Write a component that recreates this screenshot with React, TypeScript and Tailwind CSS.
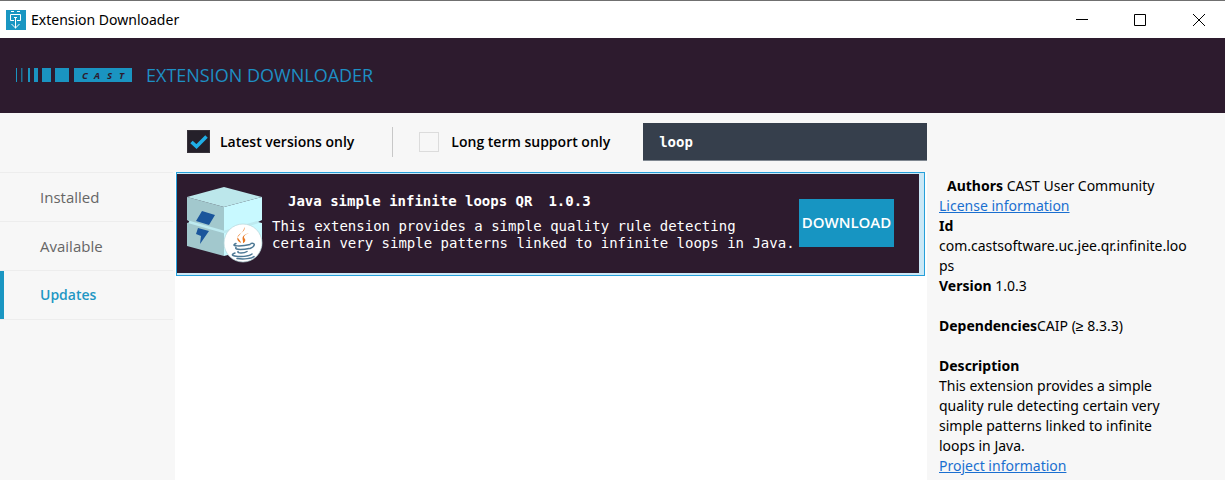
import { useState } from "react";

function AppIcon() {
  return (
    <svg viewBox="0 0 20 20" className="size-5 shrink-0" aria-hidden="true">
      <rect width="20" height="20" fill="#1996c2" />
      <g stroke="#fff" fill="none">
        <path d="M5 1.5h3M11 1.5h3" />
        <path d="M8 10.5H4.5v-6H14.500v6H11M8 7.500h3" />
        <path d="M9.500 8v10.500M5.500 14l4 4 4-4" />
      </g>
    </svg>
  );
}

function CastLogo() {
  return (
    <svg viewBox="0 0 116 14" className="h-[14px] w-[116px] shrink-0" role="img" aria-label="CAST">
      <g fill="#1a94c1">
        <rect x="0" width="1" height="14" />
        <rect x="5" width="1.500" height="14" opacity=".7" />
        <rect x="12" width="2" height="14" />
        <rect x="18" width="4" height="14" />
        <rect x="26" width="9" height="14" />
        <rect x="39" width="14" height="14" />
        <rect x="58" width="58" height="14" />
      </g>
      <g
        fill="#2d1b2e"
        fontFamily="'Open Sans', sans-serif"
        fontSize="9.500"
        fontWeight="700"
        fontStyle="italic"
      >
        <text x="66" y="10.500">C</text>
        <text x="78" y="10.500">A</text>
        <text x="91" y="10.500">S</text>
        <text x="103" y="10.500">T</text>
      </g>
    </svg>
  );
}

function PackageIcon() {
  return (
    <svg viewBox="0 0 78 78" className="size-[78px] shrink-0" aria-hidden="true">
      <path d="M1 11 38 21v49L1 60V37l3-1-3-2z" fill="#a2c8cd" />
      <path d="M38 21 76 11v23l-4 2 4 1v23L38 70z" fill="#c8f9ff" />
      <path d="M1 11 38 1 76 11 38 21z" fill="#bce7eb" />
      <path d="m16 25 13 4-6 10-13-4zM12 42l11 3-9 13 1-8-5-2z" fill="#1a559b" />
      <path d="M3 36 38 46 72 36" fill="none" stroke="#bdeaf0" strokeWidth="2.500" />
      <circle cx="57" cy="57" r="19" fill="#fff" stroke="#b5d4d9" strokeWidth=".7" />
      <path d="M58 41c3 5-8 7-6 11 1 2 3 3 3 5-10-6 4-9 3-16M63 47c-5 2-6 4-4 6 1 2-1 4-2 4 1-3-4-7 6-10" fill="#e87722" />
      <g fill="none" stroke="#4d7894" strokeWidth="1.500" strokeLinecap="round">
        <path d="M50 57.500c-7 3 6 3 14 1M65 57.500c5-1 4 3-1 5M50 61.500c-2 3 9 2 13 1M52 65.500c-1 2 6 2 9 0M49 67c-10 4 12 5 17 1M51 72.500c7 1 15 0 17-2" />
      </g>
    </svg>
  );
}

const sections = ["Installed", "Available", "Updates"];

export default function App() {
  const [active, setActive] = useState("Updates");
  const [latest, setLatest] = useState(true);
  const [lts, setLts] = useState(false);
  const [query, setQuery] = useState("loop");

  return (
    <div className="flex min-h-screen flex-col bg-[#f7f7f7] font-['Open_Sans',sans-serif] text-black">
      <div className="flex h-[38px] items-center justify-between border-t border-[#707070] bg-white pl-1.5">
        <div className="flex items-center gap-[5px]">
          <AppIcon />
          <span className="font-['Noto_Sans',sans-serif] text-sm">Extension Downloader</span>
        </div>
        <div className="flex">
          <button aria-label="Minimize" className="flex h-9 w-[58px] items-center justify-center">
            <svg viewBox="0 0 12 12" className="size-3"><path d="M0 5.500h12" stroke="#000" /></svg>
          </button>
          <button aria-label="Maximize" className="flex h-9 w-[58px] items-center justify-center">
            <svg viewBox="0 0 12 12" className="size-3"><path d="M.5.500h11v11H.5z" fill="none" stroke="#000" /></svg>
          </button>
          <button aria-label="Close" className="flex h-9 w-14 items-center justify-center pl-1">
            <svg viewBox="0 0 12 12" className="size-3"><path d="m0 0 12 12M12 0 0 12" stroke="#000" /></svg>
          </button>
        </div>
      </div>

      <header className="flex h-[75px] items-center gap-3.5 bg-[#2d1b2e] px-4 pb-0.5">
        <CastLogo />
        <h1 className="text-lg text-[#1d8fc4]">EXTENSION DOWNLOADER</h1>
      </header>

      <div className="grid grow grid-cols-[175px_minmax(0,1fr)_298px]">
        <nav className="pt-[59px]">
          <ul className="mr-0.5 border-t border-[#ededed]">
            {sections.map((name) => (
              <li key={name} className="h-[49px] border-b border-[#ededed]">
                <button
                  onClick={() => setActive(name)}
                  className={
                    active === name
                      ? "h-full w-full border-l-4 border-[#1a96c2] pl-9 text-left text-sm font-semibold text-[#1f97c4]"
                      : "h-full w-full pl-10 text-left text-[15px] text-[#666]"
                  }
                >
                  {name}
                </button>
              </li>
            ))}
          </ul>
        </nav>

        <main className="flex flex-col">
          <div className="flex h-[59px] shrink-0 items-center pb-0.5 pl-3">
            <label className="flex items-center gap-2.5 text-sm font-semibold">
              <span className="grid size-[23px] place-items-center">
                <input
                  type="checkbox"
                  checked={latest}
                  onChange={(e) => setLatest(e.target.checked)}
                  className="col-start-1 row-start-1 size-[23px] appearance-none border border-[#dcdcdc] checked:border-[#37323a] checked:bg-[#25202a]"
                />
                {latest && (
                  <svg viewBox="0 0 18 16" className="pointer-events-none col-start-1 row-start-1 h-4 w-[18px]">
                    <path d="m1.500 8 5 4.500L16.500 2.500" fill="none" stroke="#20aee6" strokeWidth="3.500" />
                  </svg>
                )}
              </span>
              Latest versions only
            </label>
            <div className="ml-[38px] h-[30px] w-px bg-[#c8c8c8]" />
            <label className="ml-[26px] flex items-center gap-3 text-sm font-semibold">
              <input
                type="checkbox"
                checked={lts}
                onChange={(e) => setLts(e.target.checked)}
                className="size-5 appearance-none border border-[#dcdcdc] checked:bg-[#25202a]"
              />
              Long term support only
            </label>
            <input
              type="text"
              aria-label="Search extensions"
              value={query}
              onChange={(e) => setQuery(e.target.value)}
              className="ml-[33px] h-[38px] min-w-0 grow border-b border-[#7f8790] bg-[#363f4c] px-4 pt-0.5 font-['DejaVu_Sans_Mono',monospace] text-sm font-bold text-white"
            />
          </div>

          <section className="grow bg-white pr-0.5 pl-px">
            <article className="flex border border-[#26a0da] bg-[#cbe8f6] pr-[5px] pb-0.5 pt-px">
              <div className="flex h-[99px] grow items-center bg-[#2d1b2e] pr-[25px] pb-0.5 pl-[9px]">
                <div className="pt-1">
                  <PackageIcon />
                </div>
                <div className="min-w-0 grow pl-2 font-['DejaVu_Sans_Mono',monospace] text-sm leading-[17px] whitespace-nowrap text-white">
                  <h2 className="mb-2 flex gap-4 pl-4 font-bold">
                    <span>Java simple infinite loops QR</span>
                    <span>1.0.3</span>
                  </h2>
                  <p>
                    This extension provides a simple quality rule detecting
                    <br />
                    certain very simple patterns linked to infinite loops in Java.
                  </p>
                </div>
                <button className="h-12 w-[95px] shrink-0 bg-[#1795c2] text-[15px] font-semibold text-white">
                  DOWNLOAD
                </button>
              </div>
            </article>
          </section>
        </main>

        <aside className="pt-[63px] pr-9 pl-3 font-['Noto_Sans',sans-serif] text-sm leading-5">
          <p className="pl-2">
            <b>Authors</b> CAST User Community
          </p>
          <p>
            <a href="#license" className="text-[#1a6fd0] underline">License information</a>
          </p>
          <p className="font-bold">Id</p>
          <p className="break-all">com.castsoftware.uc.jee.qr.infinite.loops</p>
          <p>
            <b>Version</b> 1.0.3
          </p>
          <p className="mt-5">
            <b>Dependencies</b>CAIP (≥ 8.3.3)
          </p>
          <p className="mt-5 font-bold">Description</p>
          <p className="pr-4">
            This extension provides a simple quality rule detecting certain very simple patterns linked to
            infinite loops in Java.
          </p>
          <p>
            <a href="#project" className="text-[#1a6fd0] underline">Project information</a>
          </p>
        </aside>
      </div>
    </div>
  );
}
